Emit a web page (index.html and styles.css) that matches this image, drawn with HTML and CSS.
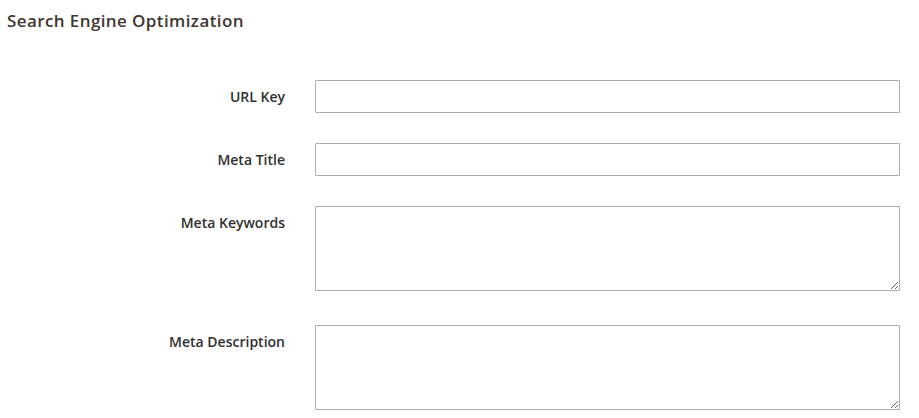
FILE: index.html
```
<!doctype html>
<html lang="en">
  <head>
    <meta charset="UTF-8" />
    <meta name="viewport" content="width=device-width, initial-scale=1.0" />
    <title>Search Engine Optimization</title>
    <link rel="stylesheet" href="styles.css">
  </head>

  <body>
    <section class="seo">
      <h3 class="seo-title">Search Engine Optimization</h3>

      <form class="seo-form">
        <div class="field">
          <label for="url-key">URL Key</label>
          <input type="text" id="url-key" />
        </div>
        <div class="field">
          <label for="meta-title">Meta Title</label>
          <input type="text" id="meta-title" />
        </div>
        <div class="field">
          <label for="meta-keywords">Meta Keywords</label>
          <textarea id="meta-keywords"></textarea>
        </div>
        <div class="field">
          <label for="meta-description">Meta Description</label>
          <textarea id="meta-description"></textarea>
        </div>
      </form>
    </section>
  </body>
</html>
```

FILE: styles.css
```
body {
  margin: 0;
  background: #fff;
  font-family: "Open Sans", "Noto Sans", sans-serif;
  color: #303030;
}

.seo {
  padding: 9px 19px 0 7px;
}

.seo-title {
  margin: 0;
  font-size: 17px;
  font-weight: 600;
  letter-spacing: 0.4px;
  line-height: 24px;
  color: #41362f;
}

.seo-form {
  margin-top: 47px;
  display: flex;
  flex-direction: column;
  gap: 30px;
}

.field {
  display: flex;
  align-items: flex-start;
  gap: 30px;

  & label {
    width: 278px;
    flex: none;
    text-align: right;
    font-size: 14px;
    font-weight: 600;
    line-height: 20px;
    padding-top: 7px;
  }

  & input,
  & textarea {
    display: block;
    flex: 1;
    box-sizing: border-box;
    margin: 0;
    border: 1px solid #adadad;
    border-radius: 1px;
    font-family: inherit;
    font-size: 14px;
    background: #fff;
  }

  & input {
    height: 33px;
  }

  & textarea {
    height: 85px;
    resize: vertical;
  }
}

.field:nth-child(4) {
  margin-top: 4px;
}
```
